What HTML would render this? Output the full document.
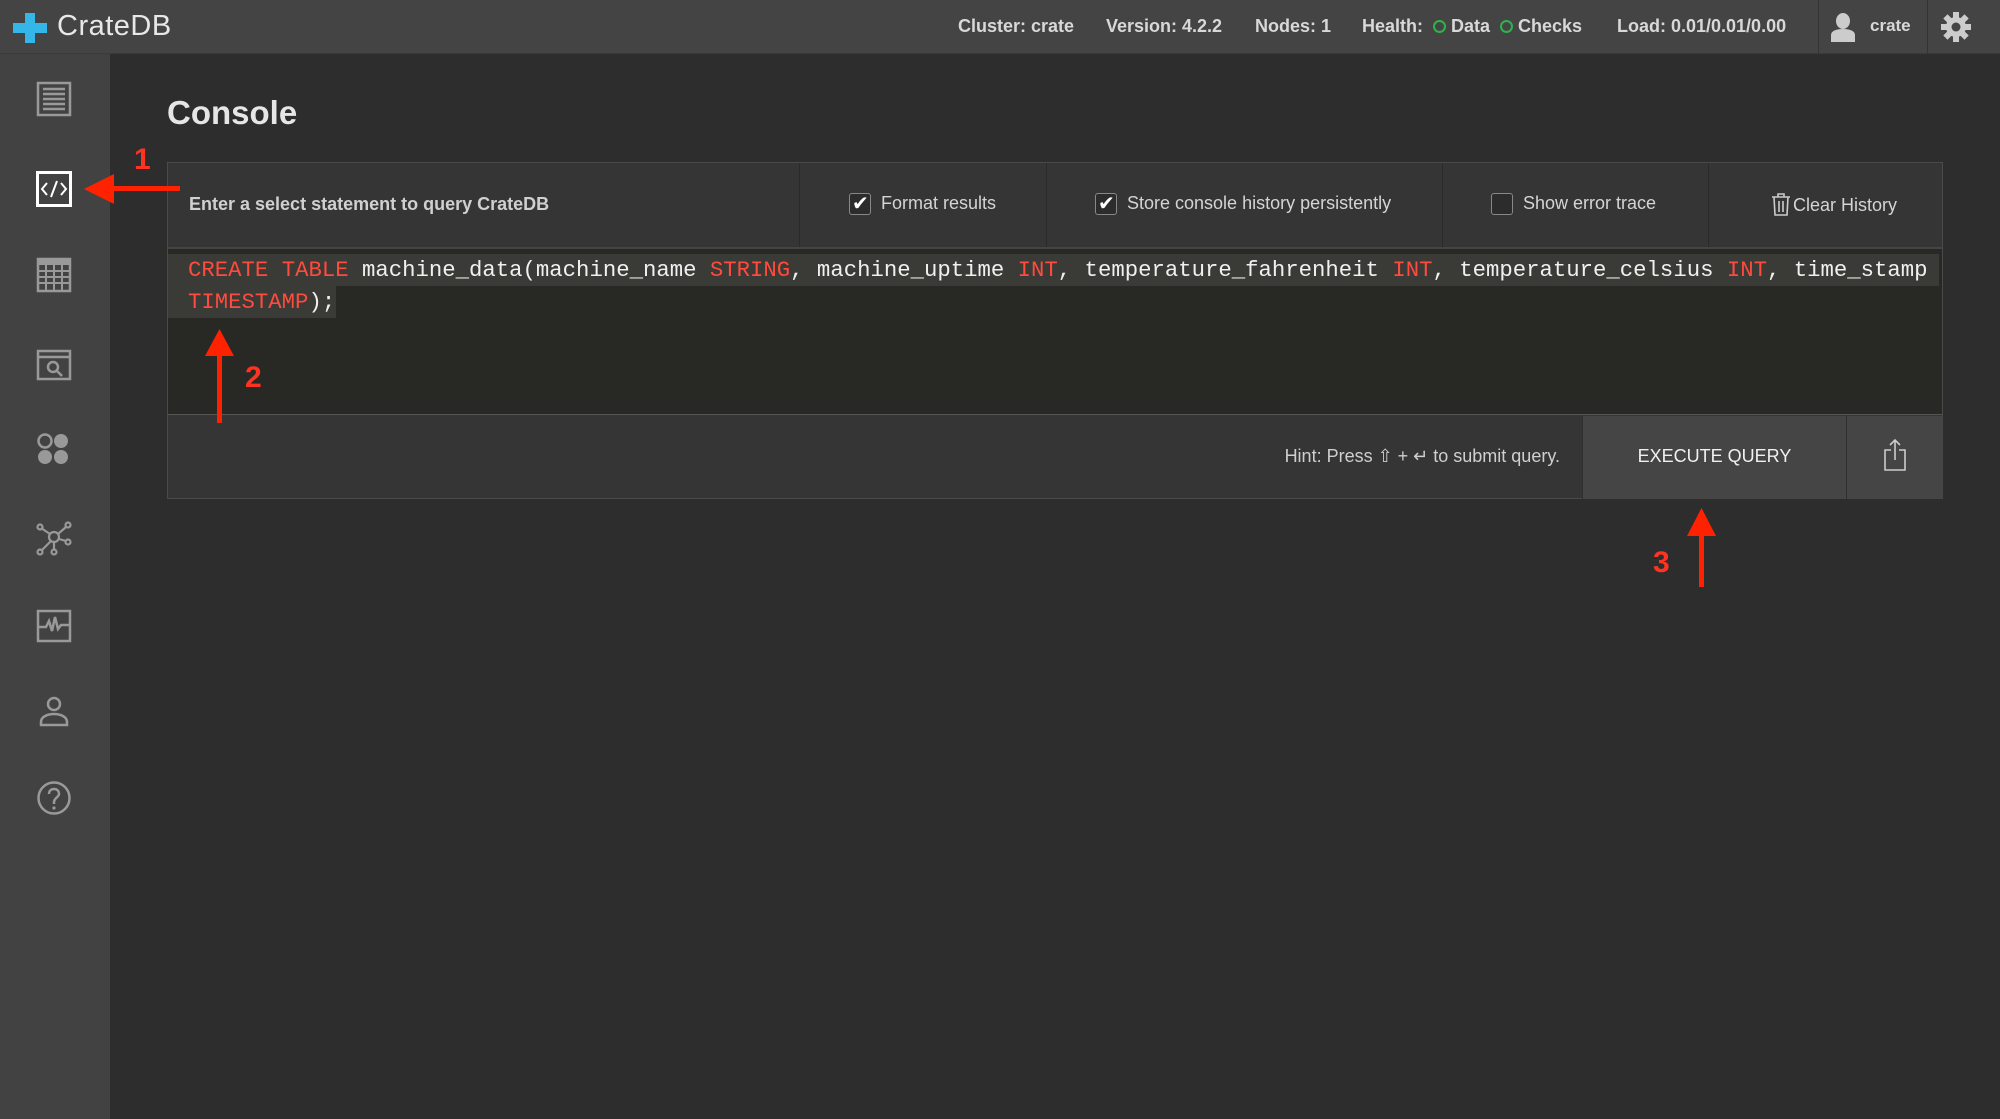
<!DOCTYPE html>
<html><head><meta charset="utf-8"><style>
*{margin:0;padding:0;box-sizing:border-box}
body{width:2000px;height:1119px;overflow:hidden;background:#2d2d2d;font-family:"Liberation Sans",sans-serif;position:relative;color:#ddd}
.a{position:absolute}
#top{left:0;top:0;width:2000px;height:54px;background:#444;border-bottom:1px solid #3a3a3a}
#side{left:0;top:54px;width:110px;height:1065px;background:#424242}
.tb{position:absolute;top:16px;font-size:18px;font-weight:bold;color:#d8d8d8;white-space:nowrap}
.dot{display:inline-block;width:13px;height:13px;border:2.5px solid #2db34a;border-radius:50%;vertical-align:-1px;margin:0 5px}
.ic{position:absolute;left:36px;width:36px;height:36px}
#panel{left:167px;top:162px;width:1776px;height:337px;border:1px solid #4a4a4a;background:#353535}
.hd{position:absolute;top:0;height:84px;border-left:1px solid #2a2a2a;font-size:18px;color:#d4d4d4}
.cb{display:inline-block;width:22px;height:22px;border:1.5px solid #888;border-radius:3px;vertical-align:middle;margin-right:10px;position:relative;background:#2c2c2c}
.cb.c::after{content:"✔";position:absolute;left:2px;top:-3px;font-size:20px;color:#fff}
#ed{left:0;top:84px;width:1774px;height:168px;background:#282825;border-top:2px solid #444;border-bottom:1px solid #555}
.code{position:absolute;font-family:"Liberation Mono",monospace;font-size:22.3px;color:#f0f0f0;background:#3a3a36;height:32px;line-height:32px;white-space:pre;padding-left:20px}
.k{color:#ff4b3e}
.red{background:#ff2200}
.num{position:absolute;color:#ff3322;font-weight:bold;font-size:30px}
</style></head><body>
<div id="top" class="a">
 <svg class="a" style="left:13px;top:13px" width="34" height="30" viewBox="0 0 34 30"><path d="M12 0h10v10h12v10H22v10H12V20H0V10h12z" fill="#34b7e8"/></svg>
 <div class="a" style="left:57px;top:10px;font-size:29px;color:#e8e8e8;letter-spacing:0.5px">CrateDB</div>
 <div class="tb" style="left:958px">Cluster: crate</div>
 <div class="tb" style="left:1106px">Version: 4.2.2</div>
 <div class="tb" style="left:1255px">Nodes: 1</div>
 <div class="tb" style="left:1362px">Health: <span class="dot"></span>Data <span class="dot"></span>Checks</div>
 <div class="tb" style="left:1617px">Load: 0.01/0.01/0.00</div>
 <div class="a" style="left:1818px;top:0;width:1px;height:54px;background:#333"></div>
 <svg class="a" style="left:1830px;top:12px" width="26" height="30" viewBox="0 0 26 30"><ellipse cx="13" cy="9" rx="7" ry="8" fill="#ccc"/><path d="M1 30v-7c0-4 5-6 12-6s12 2 12 6v7z" fill="#ccc"/></svg>
 <div class="tb" style="left:1870px;font-size:17px">crate</div>
 <div class="a" style="left:1927px;top:0;width:1px;height:54px;background:#333"></div>
 <svg class="a" style="left:1940px;top:11px" width="32" height="32" viewBox="0 0 32 32"><g fill="#ccc"><circle cx="16" cy="16" r="10"/><rect x="13" y="1" width="6" height="30"/><rect x="13" y="1" width="6" height="30" transform="rotate(45 16 16)"/><rect x="13" y="1" width="6" height="30" transform="rotate(90 16 16)"/><rect x="13" y="1" width="6" height="30" transform="rotate(135 16 16)"/></g><circle cx="16" cy="16" r="4.5" fill="#444"/></svg>
</div>
<div id="side" class="a">
 <svg class="ic" style="top:27px" viewBox="0 0 36 36"><g fill="none" stroke="#999" stroke-width="2.5"><rect x="2" y="2" width="32" height="32"/><path d="M7 8h22M7 13h22M7 18h22M7 23h22M7 28h22"/></g></svg>
 <svg class="ic" style="top:117px" viewBox="0 0 36 36"><rect x="1.5" y="1.5" width="33" height="33" fill="none" stroke="#fff" stroke-width="3"/><path d="M11 12l-5 6 5 6M25 12l5 6-5 6M21 10l-6 16" fill="none" stroke="#fff" stroke-width="2"/></svg>
 <svg class="ic" style="top:203px" viewBox="0 0 36 36"><rect x="2" y="2" width="32" height="32" fill="none" stroke="#999" stroke-width="2.5"/><rect x="2" y="2" width="32" height="6" fill="#999"/><g stroke="#999" stroke-width="2"><path d="M2 14h32M2 20h32M2 26h32M10 8v26M18 8v26M26 8v26"/></g></svg>
 <svg class="ic" style="top:293px" viewBox="0 0 36 36"><g fill="none" stroke="#999" stroke-width="2.5"><rect x="2" y="4" width="32" height="28"/><path d="M2 10h32"/><circle cx="17" cy="20" r="5"/><path d="M21 24l5 5"/></g></svg>
 <svg class="ic" style="top:378px" viewBox="0 0 36 36"><g fill="#999"><circle cx="9" cy="9" r="6.5" fill="none" stroke="#999" stroke-width="2.5"/><circle cx="25" cy="9" r="7"/><circle cx="9" cy="25" r="7"/><circle cx="25" cy="25" r="7"/></g></svg>
 <svg class="ic" style="top:466px" viewBox="0 0 36 36"><g fill="none" stroke="#999" stroke-width="2.2"><circle cx="18" cy="17" r="5"/><path d="M14 14L5 8M22 14l8-7M23 19l7 2M15 21L5 31M18 22v8"/><circle cx="4" cy="7" r="2.5"/><circle cx="32" cy="5" r="2.5"/><circle cx="32" cy="22" r="2.5"/><circle cx="4" cy="32" r="2.5"/><circle cx="18" cy="32" r="2.5"/></g></svg>
 <svg class="ic" style="top:554px" viewBox="0 0 36 36"><g fill="none" stroke="#999" stroke-width="2.5"><rect x="2" y="3" width="32" height="30"/><path d="M2 19h8l3-6 3 10 3-14 3 12 3-4h10"/></g></svg>
 <svg class="ic" style="top:640px" viewBox="0 0 36 36"><g fill="none" stroke="#999" stroke-width="2.5"><circle cx="18" cy="10" r="6"/><path d="M5 31v-3c0-5 6-8 13-8s13 3 13 8v3z"/></g></svg>
 <svg class="ic" style="top:726px" viewBox="0 0 36 36"><g fill="none" stroke="#999" stroke-width="2.5"><circle cx="18" cy="18" r="15.5"/><path d="M13 14c0-3 2-5 5-5s5 2 5 5c0 3-5 4-5 8v2"/></g><circle cx="18" cy="28" r="1.6" fill="#999"/></svg>
</div>
<div class="a" style="left:167px;top:94px;font-size:33px;font-weight:bold;color:#e6e6e6">Console</div>
<div id="panel" class="a">
 <div class="a" style="left:21px;top:31px;font-size:18px;font-weight:bold;color:#d0d0d0">Enter a select statement to query CrateDB</div>
 <div class="hd" style="left:631px;width:247px"><div class="a" style="left:49px;top:30px;white-space:nowrap"><span class="cb c"></span>Format results</div></div>
 <div class="hd" style="left:878px;width:396px"><div class="a" style="left:48px;top:30px;white-space:nowrap"><span class="cb c"></span>Store console history persistently</div></div>
 <div class="hd" style="left:1274px;width:266px"><div class="a" style="left:48px;top:30px;white-space:nowrap"><span class="cb"></span>Show error trace</div></div>
 <div class="hd" style="left:1540px;width:236px"><div class="a" style="left:62px;top:29px;white-space:nowrap"><svg width="20" height="24" viewBox="0 0 20 24" style="vertical-align:-5px;margin-right:2px"><g fill="none" stroke="#ccc" stroke-width="1.6"><path d="M1 5h18M7 5V2h6v3M3 5l1 18h12l1-18M8 9v11M12 9v11"/></g></svg>Clear History</div></div>
 <div id="ed" class="a">
  <div class="code" style="left:0;top:5px;width:1771px"><span class="k">CREATE</span> <span class="k">TABLE</span> machine_data(machine_name <span class="k">STRING</span>, machine_uptime <span class="k">INT</span>, temperature_fahrenheit <span class="k">INT</span>, temperature_celsius <span class="k">INT</span>, time_stamp</div>
  <div class="code" style="left:0;top:37px;width:168px"><span class="k">TIMESTAMP</span>);</div>
 </div>
 <div class="a" style="left:0;top:253px;width:1413px;height:80px;text-align:right;padding-right:21px;line-height:80px;font-size:18px;color:#cfcfcf">Hint: Press ⇧ + ↵ to submit query.</div>
 <div class="a" style="left:1414px;top:253px;width:264px;height:83px;background:#454545;border-left:1px solid #2f2f2f;line-height:80px;text-align:center;font-size:18px;color:#f0f0f0">EXECUTE QUERY</div>
 <div class="a" style="left:1678px;top:253px;width:97px;height:83px;background:#454545;border-left:1px solid #2f2f2f"><svg class="a" style="left:36px;top:22px" width="24" height="34" viewBox="0 0 24 34"><g fill="none" stroke="#ccc" stroke-width="1.6"><path d="M8 12H2v20h20V12h-6M12 2v20M7 7l5-5 5 5"/></g></svg></div>
</div>
<div class="a red" style="left:104px;top:186px;width:76px;height:5px"></div>
<svg class="a" style="left:84px;top:174px" width="30" height="30"><path d="M0 15L30 0v30z" fill="#ff2200"/></svg>
<div class="num" style="left:134px;top:143px">1</div>
<div class="a red" style="left:217px;top:352px;width:5px;height:71px"></div>
<svg class="a" style="left:205px;top:329px" width="29" height="27"><path d="M14.5 0L29 27H0z" fill="#ff2200"/></svg>
<div class="num" style="left:245px;top:361px">2</div>
<div class="a red" style="left:1699px;top:532px;width:5px;height:55px"></div>
<svg class="a" style="left:1687px;top:508px" width="29" height="28"><path d="M14.5 0L29 28H0z" fill="#ff2200"/></svg>
<div class="num" style="left:1653px;top:546px">3</div>
</body></html>
